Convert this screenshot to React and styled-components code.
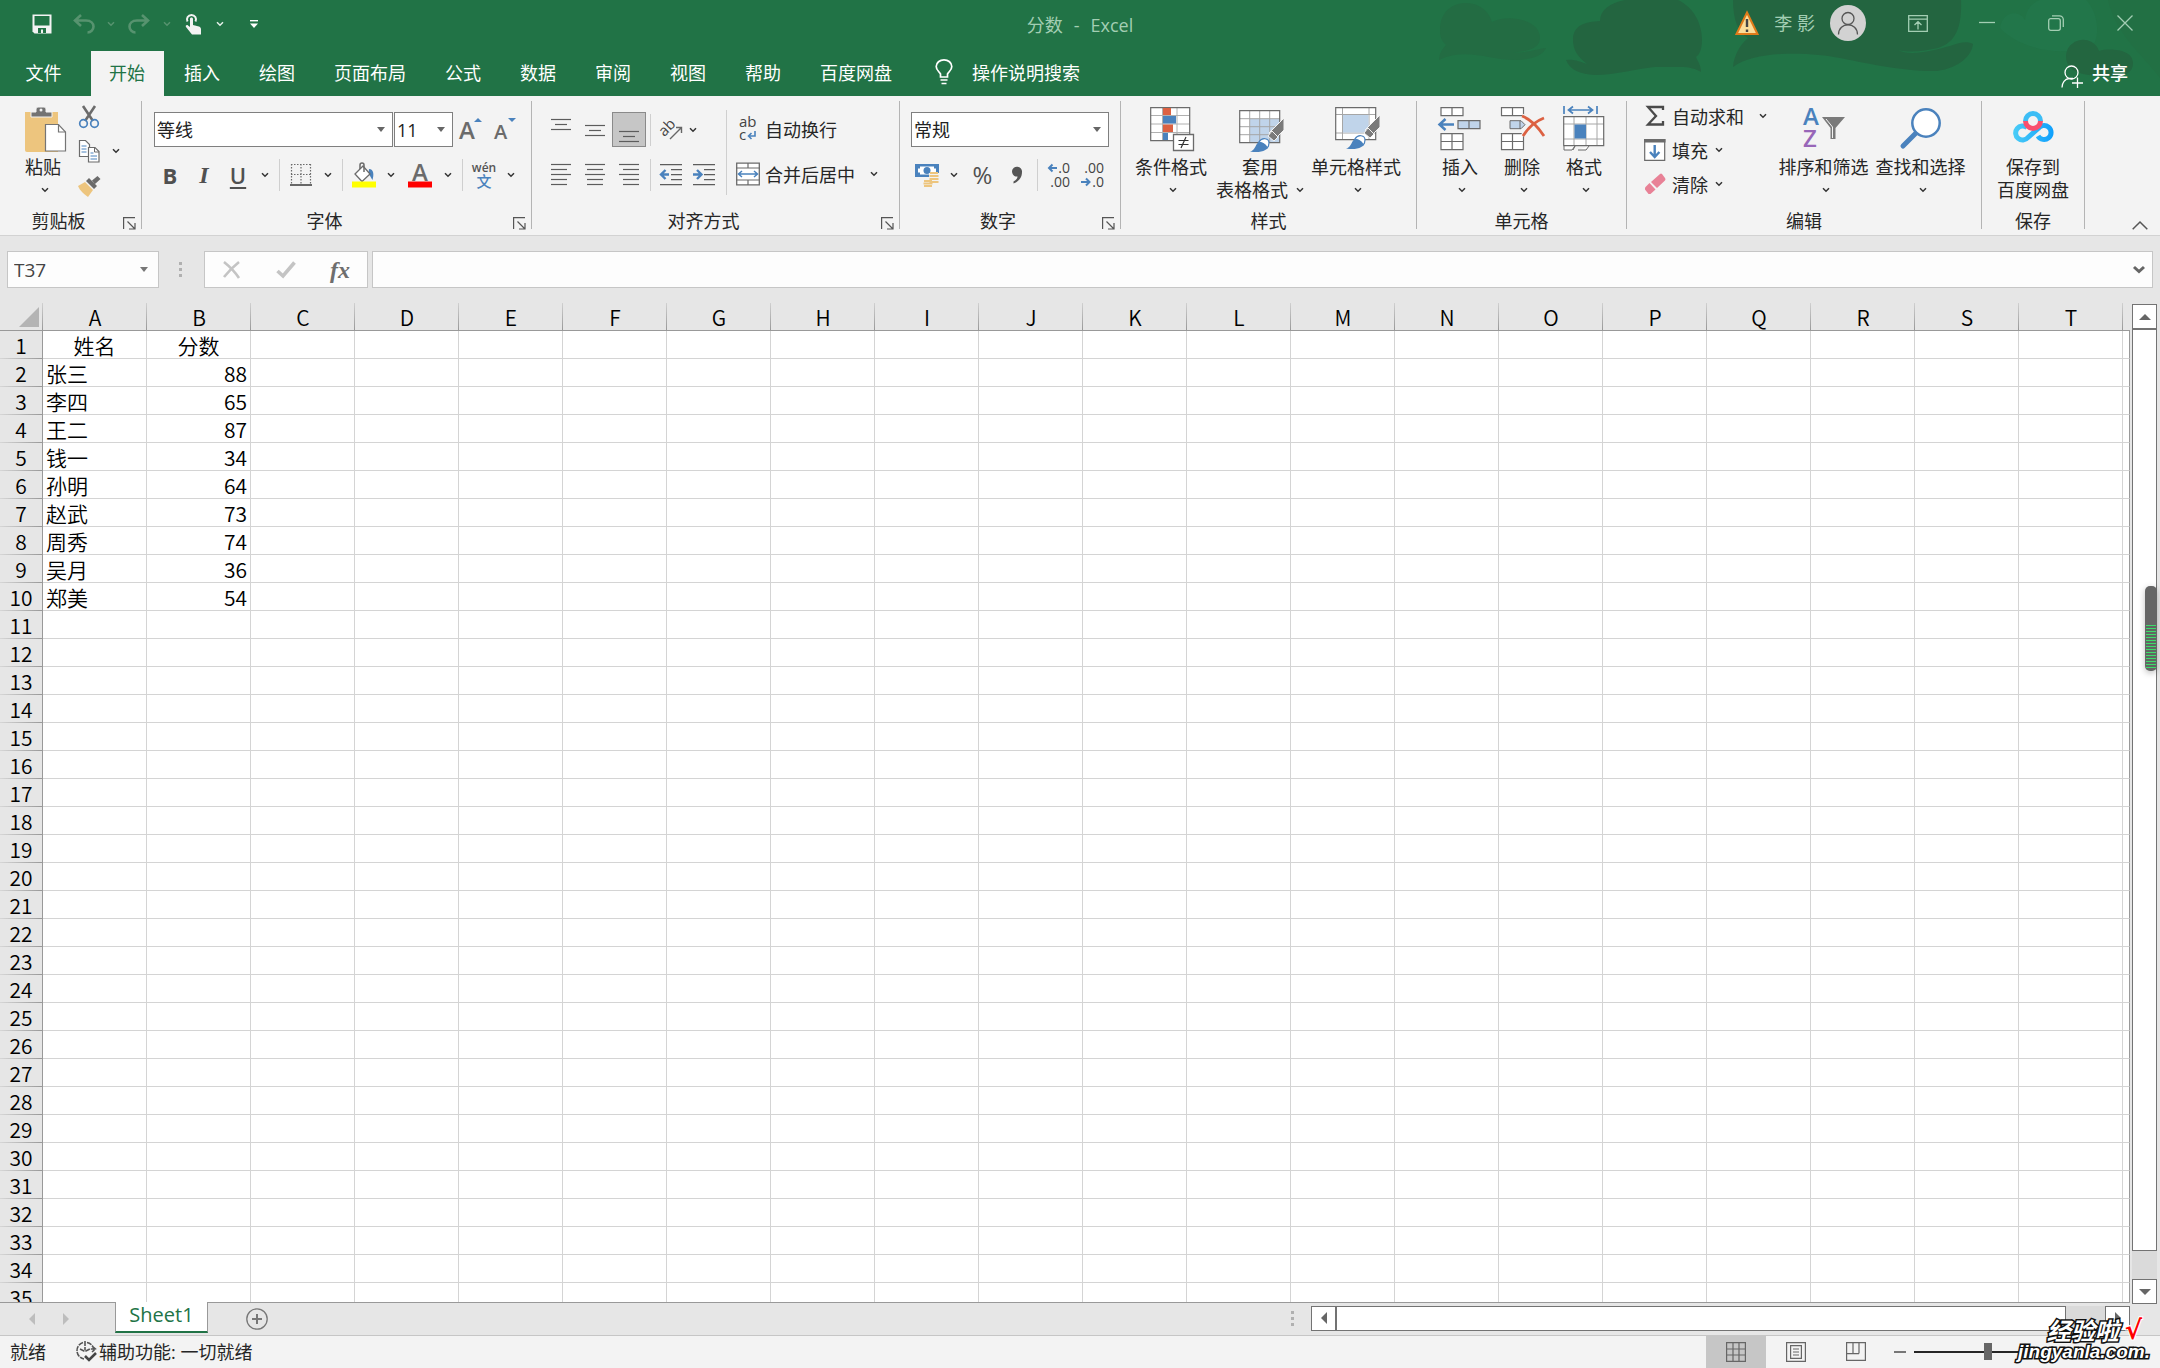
import styled, { createGlobalStyle } from 'styled-components';

const BLUE = '#4a82bd';
const GREY = '#6b6b6b';
const ORANGE = '#dc6142';
const PALE = '#c0d4ea';
const TAN = '#edc57e';
const MINT = '#a3ceb3';

const names = ['张三', '李四', '王二', '钱一', '孙明', '赵武', '周秀', '吴月', '郑美'];
const scores = [88, 65, 87, 34, 64, 73, 74, 36, 54];
const columns = 'ABCDEFGHIJKLMNOPQRST'.split('');
const rows = Array.from({ length: 35 }, (_, i) => i + 1);
const tabs = ['插入', '绘图', '页面布局', '公式', '数据', '审阅', '视图', '帮助', '百度网盘'];

const cellText = (row, col) => {
	if (row === 1) return ['姓名', '分数'][col];
	if (col === 0) return names[row - 2];
	if (col === 1) return scores[row - 2];
	return null;
};

/* ---------- icons ---------- */

const Svg = ({ w = 24, h = w, children, ...rest }) => (
	<svg width={w} height={h} viewBox={`0 0 ${w} ${h}`} fill='none' aria-hidden='true' {...rest}>
		{children}
	</svg>
);

const Chevron = ({ color = '#333' }) => (
	<Svg w={8} h={6}>
		<path d='M1 1.2l3 3 3-3' stroke={color} strokeWidth='1.5' />
	</Svg>
);

const SaveIcon = () => (
	<Svg w={20}>
		<path d='M.5.5h19v19H2.5l-2-2z' fill='#f3f3f3' />
		<path d='M2.500 2h15v9.500h-15zM6 14h8v5h-3v-3.500H9V19H6z' fill='#217346' />
	</Svg>
);

const UndoIcon = ({ flip }) => (
	<Svg w={22} h={20}>
		<path
			transform={flip ? 'translate(22 0) scale(-1 1)' : undefined}
			d='M2 6.500h11c5 0 7.500 3 7.500 6s-2.500 6-6 6M8 1L2 6.500 8 12'
			stroke='#57936f'
			strokeWidth='2.600'
		/>
	</Svg>
);

const TouchIcon = () => (
	<Svg w={18} h={22}>
		<path d='M3.500 8.500a4.500 4.500 0 1 1 8 0' stroke='#f3f3f3' strokeWidth='2' />
		<path d='M6 6c0-2 3-2 3 0v6l6 1.500c1.500.5 2 1.500 2 3V21.500H8L2 14c-1-1.500 1-2.500 2-1.500l2 1.500z' fill='#f3f3f3' />
	</Svg>
);

const CustomizeIcon = () => (
	<Svg w={8} h={8}>
		<path d='M0 .7h8' stroke='#fff' strokeWidth='1.400' />
		<path d='M0 3.500h8L4 8z' fill='#fff' />
	</Svg>
);

const BulbIcon = () => (
	<Svg w={18} h={26}>
		<path d='M5.500 18v-3C4 12.500 1.200 11 1.200 7.500a7.800 6.700 0 0 1 15.600 0c0 3.500-2.800 5-4.300 7.500v3zM5.500 21h7M6.500 24.500h5' stroke='#fff' strokeWidth='1.700' />
	</Svg>
);

const WarningIcon = () => (
	<Svg w={24}>
		<path d='M12 1.500L22.500 23h-21z' fill='#fbdc98' stroke='#e07b1a' strokeWidth='2' />
		<path d='M12 8v8M12 18.500v2.500' stroke='#444' strokeWidth='2.400' />
	</Svg>
);

const PersonIcon = () => (
	<Svg w={24}>
		<circle cx='12' cy='7.500' r='6' stroke='#555' strokeWidth='1.300' />
		<path d='M2.500 23.500c0-13 19-13 19 0' stroke='#555' strokeWidth='1.300' />
	</Svg>
);

const RibbonDisplayIcon = () => (
	<Svg w={20} h={17}>
		<path d='M.7.7h18.600v15.600H.7zM.7 4.200h18.600M10 14.500V7M6.500 10L10 6.700 13.500 10' stroke={MINT} strokeWidth='1.300' />
	</Svg>
);

const MinIcon = () => <Svg w={16}><path d='M0 7.500h16' stroke={MINT} strokeWidth='1.300' /></Svg>;

const RestoreIcon = () => (
	<Svg w={16}>
		<rect x='.7' y='3.700' width='11.600' height='11.600' rx='2' stroke={MINT} strokeWidth='1.300' />
		<path d='M4 .8h7.500a3.800 3.800 0 0 1 3.800 3.800V12' stroke={MINT} strokeWidth='1.300' />
	</Svg>
);

const CloseIcon = () => <Svg w={16}><path d='M.5.5l15 15M15.500.5l-15 15' stroke={MINT} strokeWidth='1.300' /></Svg>;

const ShareIcon = () => (
	<Svg w={23}>
		<circle cx='10.500' cy='7.500' r='6.500' stroke='#fff' strokeWidth='1.300' />
		<path d='M1 22.500c0-5 3-8.500 7-9h4M11 18h11M16.500 12.500v10.500' stroke='#fff' strokeWidth='1.300' />
	</Svg>
);

const PasteIcon = () => (
	<Svg w={46}>
		<path d='M5 6h33v40H7a2 2 0 0 1-2-2z' fill={TAN} />
		<path d='M11 11V6h5V3q0-2 2-2h6q2 0 2 2v3h6v5z' fill='#737373' stroke='#f3f3f3' strokeWidth='1' />
		<circle cx='21' cy='4' r='1.500' fill='#f3f3f3' />
		<path d='M25.500 18.500h13l7 7.500v19h-20z' fill='#fff' stroke='#757575' strokeWidth='1.200' />
		<path d='M38.500 18.500V26h7' stroke='#757575' strokeWidth='1.200' />
	</Svg>
);

const CutIcon = () => (
	<Svg w={22} h={24}>
		<path d='M5 1l10 15M17 1L7 16' stroke={GREY} strokeWidth='2.600' />
		<circle cx='5.500' cy='18.500' r='3.800' stroke={BLUE} strokeWidth='1.700' />
		<circle cx='16.500' cy='18.500' r='3.800' stroke={BLUE} strokeWidth='1.700' />
	</Svg>
);

const CopyIcon = () => (
	<Svg w={22} h={24}>
		<path d='M1.500 1.500h6l4 4v12h-10z' fill='#fff' stroke={GREY} strokeWidth='1.200' />
		<path d='M3.500 7h5M3.500 10h5M3.500 13h5' stroke={BLUE} />
		<path d='M10.500 8.500h6.500l4 4v10.500H10.500z' fill='#fff' stroke={GREY} strokeWidth='1.200' />
		<path d='M16.500 8.500V13H21' stroke={GREY} />
		<path d='M12.500 14h3M12.500 17h6.500M12.500 20h6.500' stroke={BLUE} />
	</Svg>
);

const PainterIcon = () => (
	<Svg w={24} h={22}>
		<path d='M1 12l7-4 8 8-5 7C7 20 3 17 1 12z' fill={TAN} />
		<path d='M9 7l3-3 8 8-3 3zM15 6.500L20.500 2 23.500 5 18 10z' fill={GREY} />
	</Svg>
);

const GrowIcon = ({ down }) => (
	<Svg w={24} h={26}>
		<text x='0' y='22' fontFamily='Open Sans' fontWeight='600' fontSize={down ? 20 : 24} fill={GREY}>A</text>
		<path d={down ? 'M14 1h8l-4 4z' : 'M15 5h8l-4-4z'} fill={BLUE} />
	</Svg>
);

const BordersIcon = () => (
	<Svg w={22} h={24}>
		<path d='M1 1.500h20M1 11.500h20M1.500 1v20M11 1v20M20.500 1v20' stroke={GREY} strokeWidth='1.200' strokeDasharray='1.500 1.500' />
		<path d='M0 22h22' stroke='#444' strokeWidth='1.600' />
	</Svg>
);

const FillIcon = () => (
	<Svg w={26}>
		<path d='M18 7c5 0 5 6 3.500 11-1.500-2-2-4-4-6z' fill={BLUE} />
		<path d='M4 12l8-8 7 8-8 7.500z' fill='#fff' stroke={GREY} strokeWidth='1.300' />
		<path d='M9 7V3q0-2 2-2t2 2v7' stroke={GREY} strokeWidth='1.500' />
		<path d='M1 19.500h24v6H1z' fill='#ff0' />
	</Svg>
);

const FontColorIcon = () => (
	<Svg w={26}>
		<text x='5' y='19' fontFamily='Open Sans' fontWeight='600' fontSize='24' fill={GREY}>A</text>
		<path d='M1 19.500h24v6H1z' fill='#f00' />
	</Svg>
);

const PhoneticIcon = () => (
	<Svg w={24} h={28}>
		<text x='12' y='11' textAnchor='middle' fontFamily='Open Sans' fontSize='12' fontWeight='600' fill='#555'>wén</text>
		<text x='12' y='26' textAnchor='middle' fontFamily='Noto Sans CJK SC' fontSize='15' fontWeight='500' fill={BLUE}>文</text>
	</Svg>
);

const Lines = ({ widths, align = 'center', top = 1, step = 5, h = 24 }) => (
	<Svg w={20} h={h}>
		{widths.map((n, i) => {
			const x = { left: 0, center: (20 - n) / 2, right: 20 - n }[align];
			return <path key={i} d={`M${x} ${top + i * step + 0.5}h${n}`} stroke='#5c5c5c' strokeWidth='1.200' />;
		})}
	</Svg>
);

const OrientIcon = () => (
	<Svg w={22} h={22}>
		<text x='1' y='15' transform='rotate(-45 6 14)' fontFamily='Open Sans' fontSize='15' fill='#444'>ab</text>
		<path d='M9 20L20 9M15 8.500h5.500V14' stroke='#666' strokeWidth='1.400' />
	</Svg>
);

const IndentIcon = ({ right }) => (
	<Svg w={22} h={22}>
		<path d='M0 .6h22M11 5.600h11M11 10.600h11M11 15.600h11M0 20.600h22' stroke='#5c5c5c' strokeWidth='1.200' />
		<path d={right ? 'M0 10.500h7M4 6l4.500 4.500L4 15' : 'M9 10.500H2M5.500 6L1 10.500 5.500 15'} stroke={BLUE} strokeWidth='2.400' />
	</Svg>
);

const WrapIcon = () => (
	<Svg w={24}>
		<text x='3' y='10' fontFamily='Open Sans' fontSize='15' fill='#444'>ab</text>
		<text x='3' y='23' fontFamily='Open Sans' fontSize='15' fill='#444'>c</text>
		<path d='M19 14v5h-6M15.500 16L12.500 19l3 3' stroke={BLUE} strokeWidth='1.600' />
	</Svg>
);

const MergeIcon = () => (
	<Svg w={24}>
		<path d='M.7 1.200h22.600v21.600H.7z' fill='#fff' stroke={GREY} strokeWidth='1.300' />
		<path d='M0 6h24M0 18h24M12 1v5M12 18v5' stroke={GREY} strokeWidth='1.200' />
		<path d='M3 12h18M6 9l-3.500 3L6 15M18 9l3.500 3-3.500 3' stroke={BLUE} strokeWidth='1.500' />
	</Svg>
);

const MoneyIcon = () => (
	<Svg w={24}>
		<path d='M0 1h24v13H0z' fill={BLUE} />
		<path d='M5 3.500h14v2h2v4h-2v2H5v-2H3v-4h2z' fill='#fff' />
		<circle cx='12' cy='7.500' r='3.500' fill={BLUE} />
		<path d='M14 10h10v10h-6v4H8v-6h6z' fill='#f3f3f3' />
		<path d='M15 10h8M14.500 13h9M14.500 16h9M14.500 19h9M9 18h8M8.500 20.500h9M9 23h8' stroke={TAN} strokeWidth='2' />
	</Svg>
);

const DecimalIcon = ({ less }) => (
	<Svg w={24} h={26}>
		<text x='23' y='11' textAnchor='end' fontFamily='Open Sans' fontSize='14' fill='#444'>{less ? '.00' : '.0'}</text>
		<text x='23' y='25' textAnchor='end' fontFamily='Open Sans' fontSize='14' fill='#444'>{less ? '.0' : '.00'}</text>
		<path d={less ? 'M0 20h8M5 16.500L8.500 20 5 23.500' : 'M10 6H2M5.500 2.500L2 6l3.500 3.500'} stroke={BLUE} strokeWidth='2' />
	</Svg>
);

const Brush = ({ y = 0 }) => (
	<g transform={`translate(0 ${y})`}>
		<path d='M45 12v12l-9 9-6-6z' fill='#7a7a7a' stroke='#f3f3f3' />
		<path d='M33 25l6 6-4 4-6-5z' fill='#7a7a7a' stroke='#f3f3f3' />
		<path d='M11 45.500c5-1 5-6 8-9 4-5 11-3 11 2 0 6-9 9-19 7z' fill={BLUE} />
		<path d='M20 36c3-5 10-4 10 1 0 2-1 4-2 5-1-4-4-5-8-6z' fill='#fff' stroke={BLUE} strokeWidth='1.200' />
	</g>
);

const ConditionalIcon = () => (
	<Svg w={46}>
		<g transform='translate(2 0)'>
			<path d='M.7 1.700h39v33H.7z' fill='#fff' />
			<path d='M1 9.500h39M1 18h39M1 26.500h39M12.500 2v32M27 2v32' stroke='#b0b0b0' />
			<path d='M.7 1.700h39v33H.7z' stroke={GREY} strokeWidth='1.200' />
			<path d='M13 2h8v7h-8zM13 18.500h10v7.500H13z' fill={ORANGE} />
			<path d='M13 10h13v7.500H13zM13 27h5v7h-5z' fill={BLUE} />
			<path d='M23.500 28.500h20v16h-20z' fill='#fff' stroke={GREY} strokeWidth='1.300' />
			<path d='M28.500 34.500h10M28.500 38.500h10M36 31l-5 11' stroke='#333' strokeWidth='1.200' />
		</g>
	</Svg>
);

const TableFormatIcon = () => (
	<Svg w={46}>
		<g transform='translate(2 0)'>
			<path d='M.7 4.700h40v32H.7z' fill='#fff' />
			<path d='M11 13h29.500v23.500H11z' fill={PALE} />
			<path d='M1 12.700h40M1 20.700h40M1 28.700h40M10.700 5v32M20.700 5v32M30.700 5v32' stroke='#a6a6a6' />
			<path d='M.7 4.700h40v32H.7z' stroke={GREY} strokeWidth='1.200' />
			<Brush />
		</g>
	</Svg>
);

const CellStyleIcon = () => (
	<Svg w={46}>
		<g transform='translate(2 0)'>
			<path d='M.7 1.700h40v32H.7z' fill='#fff' />
			<path d='M1 8.500h40M1 27h40M7.500 2v32M34 2v32' stroke='#a6a6a6' />
			<path d='M8 9h25.500v17.500H8z' fill={PALE} />
			<path d='M.7 1.700h40v32H.7z' stroke={GREY} strokeWidth='1.200' />
			<Brush y={-3} />
		</g>
	</Svg>
);

const InsertIcon = () => (
	<Svg w={46}>
		<path d='M4 1.700h22v8H4zM15 2v8M4 27.700h22v16H4zM4 35.500h22M15 28v16' fill='#fff' stroke={GREY} strokeWidth='1.200' />
		<path d='M21 14.700h22v8H21zM32 15v8' fill={PALE} stroke={GREY} strokeWidth='1.200' />
		<path d='M17 18.500H3M8.500 13l-6 5.500 6 5.500' stroke={BLUE} strokeWidth='2.500' />
	</Svg>
);

const DeleteIcon = () => (
	<Svg w={46}>
		<path d='M2.500 1.700h22v8h-22zM13.500 2v8M2.500 27.700h22v16h-22zM2.500 35.500h22M13.500 28v16' fill='#fff' stroke={GREY} strokeWidth='1.200' />
		<path d='M11 14.700h11l4 4-4 4H11zM21 15v8' fill={PALE} stroke={GREY} />
		<path d='M23 10c8 3 16 11 22 20M45 12c-8 3-16 10-21 18' stroke='#f3f3f3' strokeWidth='5' />
		<path d='M23 10c8 3 16 11 22 20M45 12c-8 3-16 10-21 18' stroke={ORANGE} strokeWidth='2.800' />
	</Svg>
);

const FormatIcon = () => (
	<Svg w={46}>
		<path d='M3 0v8M36 0v8M8 4h23M12 .5L7.500 4l4.500 3.500M27 .5L31.500 4 27 7.500' stroke={BLUE} strokeWidth='1.700' />
		<path d='M3 40v4h8l3-4M17 44h8l3-4M14 40l-2 4' fill='#fff' stroke={GREY} />
		<path d='M2.700 10.700h40v29h-40z' fill='#fff' />
		<path d='M3 18h40M3 33h40M13 11v29M25 11v29M36 11v29' stroke='#a6a6a6' />
		<path d='M13.500 18.500H25v14H13.500z' fill={BLUE} />
		<path d='M2.700 10.700h40v29h-40z' stroke={GREY} strokeWidth='1.200' />
	</Svg>
);

const SumIcon = () => (
	<Svg w={24}>
		<path d='M20 6V3H5l8 9-8 8.500h15V17' stroke='#4a4a4a' strokeWidth='2.300' />
	</Svg>
);

const FillDownIcon = () => (
	<Svg w={24}>
		<path d='M1.700 1.700h20v20.600h-20z' fill='#fff' stroke={GREY} strokeWidth='1.200' />
		<path d='M1 1h21.500v3.500H1z' fill={GREY} />
		<path d='M11.700 7v12M7 14l4.700 5 4.700-5' stroke={BLUE} strokeWidth='2.400' />
	</Svg>
);

const EraserIcon = () => (
	<Svg w={24}>
		<path d='M8 10l9-8q1-1 2 0l3 4q1 1 0 2.500L14 16z' fill='#e88196' />
		<path d='M6.500 11l6 6.500-5 4.500H5.500L2 17.500v-2z' fill='#e88196' />
	</Svg>
);

const SortIcon = () => (
	<Svg w={46}>
		<text x='2' y='19' fontFamily='Open Sans' fontSize='24' fontWeight='600' fill={BLUE}>A</text>
		<text x='2' y='41' fontFamily='Open Sans' fontSize='24' fontWeight='600' fill='#9866b8'>Z</text>
		<path d='M21 11h23L34.500 22v11h-5V22z' fill='#7a7a7a' />
		<path d='M25 13l6.500 8v11' stroke='#f3f3f3' />
	</Svg>
);

const FindIcon = () => (
	<Svg w={46}>
		<path d='M19 26L5 40' stroke={BLUE} strokeWidth='5' strokeLinecap='round' />
		<circle cx='28' cy='17' r='13.700' fill='#fff' stroke={BLUE} strokeWidth='2.500' />
	</Svg>
);

const NetdiskIcon = () => (
	<Svg w={46}>
		<defs>
			<linearGradient id='ring' x1='0' x2='46' y1='0' y2='0' gradientUnits='userSpaceOnUse'>
				<stop offset='0' stopColor='#4fd0f6' />
				<stop offset='1' stopColor='#0c9dfd' />
			</linearGradient>
		</defs>
		<path d='M31 20L18 31.500a7 7 0 1 1-1-10M28 30a7 7 0 1 0 0-7' stroke='url(#ring)' strokeWidth='5' />
		<path d='M15.500 15a7.500 7.500 0 0 1 15 0' stroke='#3cbdf5' strokeWidth='5' />
		<path d='M30.500 15a7.500 7.500 0 0 1-15 0' stroke='#f8506f' strokeWidth='5' />
	</Svg>
);

const LauncherIcon = () => (
	<Svg w={13}>
		<path d='M.6 12V.6H12M4.500 4.500l7 7M12 6v6H6' stroke='#555' strokeWidth='1.200' />
	</Svg>
);

const CancelIcon = () => (
	<Svg w={20}><path d='M2 2c5 4 11 10 15 16M17 2C12 6 6 12 2 17' stroke='#c4c4c4' strokeWidth='2.600' /></Svg>
);
const AcceptIcon = () => (
	<Svg w={20}><path d='M1.500 11L7 16 18.500 2.500' stroke='#c4c4c4' strokeWidth='3.600' /></Svg>
);

const Triangle = ({ dir, color = '#666' }) => (
	<Svg w={12} h={12}>
		<path
			d={{ up: 'M0 9h12L6 3z', down: 'M0 3h12L6 9z', left: 'M9 0v12L3 6z', right: 'M3 0v12l6-6z' }[dir]}
			fill={color}
		/>
	</Svg>
);

const AccessIcon = () => (
	<Svg w={22}>
		<path d='M8 2.500A8.500 8.500 0 0 0 9 19M12 2.500c3 .5 6 3 6.500 6M10 1v9M5 9l5 2.500L15 9h5M17 6l3.500 3-3.500 3' stroke='#555' strokeWidth='1.600' strokeDasharray='5 1' />
		<path d='M10 16l4 4 7-7' stroke='#444' strokeWidth='2.600' />
	</Svg>
);

const NormalViewIcon = () => (
	<Svg w={20}><path d='M.6.6h18.800v18.800H.6zM.6 7h18.800M.6 13h18.800M7 .6v18.800M13 .6v18.800' stroke='#666' strokeWidth='1.200' /></Svg>
);
const PageViewIcon = () => (
	<Svg w={20}><path d='M.6.6h18.800v18.800H.6zM4.600 3.600h10.800v12.800H4.600zM7 7h6M7 10h6M7 13h6' stroke='#666' strokeWidth='1.200' /></Svg>
);
const BreakViewIcon = () => (
	<Svg w={20}><path d='M.6.6h18.800v17.800H.6zM7 .6v11M13 .6v11M.6 11.600h12.400' stroke='#666' strokeWidth='1.200' /></Svg>
);

const CloudArt = () => (
	<Art viewBox='1400 0 760 96' aria-hidden='true'>
		<path d='M1440 30C1440 12 1452 3 1466 3C1480 3 1489 12 1492 22C1505 14 1540 18 1540 38C1540 47 1530 52 1513 52C1525 54 1540 48 1546 48C1543 56 1530 60 1515 60C1490 60 1465 47 1439 60C1440 50 1444 48 1446 45C1441 40 1440 36 1440 30Z' fill='#236c43' />
		<path d='M1573 40C1573 25 1585 22 1600 21C1600 10 1610 3 1625 0H1678C1695 8 1702 25 1702 40C1702 50 1699 55 1696 57C1698 62 1701 65 1701 72C1696 69 1690 67 1680 67H1655C1640 68 1615 75 1595 75C1580 74 1570 70 1566 60C1575 59 1580 62 1587 64C1578 57 1573 50 1573 40Z' fill='#236540' />
		<path d='M1733 0H1961C1962 25 1957 42 1938 48C1925 51 1910 53 1898 50C1910 57 1935 50 1950 46C1960 42 1968 41 1973 44C1972 55 1960 68 1937 71C1905 72 1860 62 1840 58C1810 52 1755 50 1733 67C1734 55 1740 45 1748 38C1738 32 1733 20 1733 0Z' fill='#236540' />
		<path d='M2000 28C2003 10 2020 10 2025 20C2026 8 2034 2 2040 0H2086C2096 10 2100 28 2095 42C2070 60 2020 50 2000 28Z' fill='#22764a' />
		<path d='M2108 0h52v78c-14-20-44-42-52-78z' fill='#227044' />
		<path d='M2066 56a17 17 0 0 1 33-5c10-3 34-2 34 12 0 10-8 13-20 14-20-2-47 0-47-21z' fill='#236640' />
	</Art>
);

/* ---------- page ---------- */

const ToolDrop = ({ w = 20, label }) => (
	<Tool $w={w} aria-label={label}>
		<Chevron />
	</Tool>
);

const Big = ({ w, icon, lines, inlineDrop, noDrop }) => (
	<BigButton $w={w}>
		{icon}
		<span>{lines[0]}</span>
		<span>
			{lines[1]}
			{!noDrop && <Drop $gap={inlineDrop ? 8 : 4}><Chevron /></Drop>}
		</span>
	</BigButton>
);

const RibbonGroup = ({ w, title, launcher, children }) => (
	<>
		<Group $w={w}>
			<GroupBody>{children}</GroupBody>
			<GroupFooter>
				<span>{title}</span>
				{launcher && <Launcher aria-label={`${title}设置`}><LauncherIcon /></Launcher>}
			</GroupFooter>
		</Group>
		<GroupLine />
	</>
);

const Picker = ({ w, label, value }) => (
	<PickerBox $w={w}>
		<select aria-label={label} defaultValue={value}>
			<option>{value}</option>
		</select>
		<Svg w={8} h={5}><path d='M0 0h8L4 5z' fill='#666' /></Svg>
	</PickerBox>
);

export default function App() {
	return (
		<Page>
			<GlobalStyle />
			<Header>
				<CloudArt />
				<TitleBar>
					<QuickAccess>
						<QuickButton $w={38} aria-label='保存'><SaveIcon /></QuickButton>
						<QuickButton $w={46} aria-label='撤消'><UndoIcon /></QuickButton>
						<QuickButton $w={8} aria-label='撤消列表'><Chevron color='#57936f' /></QuickButton>
						<QuickButton $w={48} aria-label='恢复'><UndoIcon flip /></QuickButton>
						<QuickButton $w={8} aria-label='恢复列表'><Chevron color='#57936f' /></QuickButton>
						<QuickButton $w={44} aria-label='触摸模式'><TouchIcon /></QuickButton>
						<QuickButton $w={10} aria-label='触摸选项'><Chevron color='#e6f0ea' /></QuickButton>
						<QuickButton $w={58} aria-label='自定义快速访问工具栏'><CustomizeIcon /></QuickButton>
					</QuickAccess>
					<DocTitle><span>分数</span><span>-</span><span>Excel</span></DocTitle>
					<WindowArea>
						<Account>
							<WarningIcon />
							<span>李 影</span>
							<Avatar aria-label='帐户'><PersonIcon /></Avatar>
						</Account>
						<WindowButton aria-label='功能区显示选项'><RibbonDisplayIcon /></WindowButton>
						<WindowButton aria-label='最小化'><MinIcon /></WindowButton>
						<WindowButton aria-label='还原'><RestoreIcon /></WindowButton>
						<WindowButton aria-label='关闭'><CloseIcon /></WindowButton>
					</WindowArea>
				</TitleBar>
				<TabBar>
					<FileTab>文件</FileTab>
					<Tab $active>开始</Tab>
					{tabs.map((t) => <Tab key={t}>{t}</Tab>)}
					<TellMe><BulbIcon />操作说明搜索</TellMe>
					<Share><ShareIcon /><span>共享</span></Share>
				</TabBar>
			</Header>

			<Ribbon>
				<RibbonGroup w={141} title='剪贴板' launcher>
					<Indent $w={18} />
					<Big w={50} icon={<PasteIcon />} lines={['粘贴']} />
					<SmallStack>
						<SmallRow><Tool aria-label='剪切'><CutIcon /></Tool></SmallRow>
						<SmallRow><Tool aria-label='复制'><CopyIcon /></Tool><ToolDrop label='复制选项' /></SmallRow>
						<SmallRow><Tool aria-label='格式刷'><PainterIcon /></Tool></SmallRow>
					</SmallStack>
				</RibbonGroup>

				<RibbonGroup w={389} title='字体' launcher>
					<Indent $w={11} />
					<Stack>
						<PickerRow>
							<Picker w={239} label='字体' value='等线' />
							<Picker w={59} label='字号' value='11' />
							<Tool aria-label='增大字号'><GrowIcon /></Tool>
							<Tool aria-label='减小字号'><GrowIcon down /></Tool>
						</PickerRow>
						<ToolRow>
							<Tool aria-label='加粗'><Glyph $weight={700}>B</Glyph></Tool>
							<Tool aria-label='倾斜'><Glyph $italic $weight={700}>I</Glyph></Tool>
							<Tool aria-label='下划线'><Glyph $underline $weight={600}>U</Glyph></Tool>
							<ToolDrop label='下划线选项' />
							<ToolLine />
							<Tool aria-label='边框'><BordersIcon /></Tool>
							<ToolDrop label='边框选项' />
							<ToolLine />
							<Tool aria-label='填充颜色'><FillIcon /></Tool>
							<ToolDrop label='填充颜色选项' />
							<Tool $w={37} aria-label='字体颜色'><FontColorIcon /></Tool>
							<ToolDrop label='字体颜色选项' />
							<ToolLine />
							<Tool aria-label='拼音'><PhoneticIcon /></Tool>
							<ToolDrop label='拼音选项' />
						</ToolRow>
					</Stack>
				</RibbonGroup>

				<RibbonGroup w={367} title='对齐方式' launcher>
					<Indent $w={12} />
					<Stack $w={182}>
						<ToolRow $tall>
							<Tool aria-label='顶端对齐'><Lines widths={[20, 12, 20]} /></Tool>
							<Tool aria-label='垂直居中'><Lines widths={[20, 12, 20]} top={7} /></Tool>
							<Tool $on aria-label='底端对齐'><Lines widths={[20, 12, 20]} top={13} /></Tool>
							<ToolLine />
							<Tool aria-label='方向'><OrientIcon /></Tool>
							<ToolDrop w={8} label='方向选项' />
						</ToolRow>
						<ToolRow>
							<Tool aria-label='左对齐'><Lines align='left' widths={[20, 16, 20, 16, 16]} /></Tool>
							<Tool aria-label='居中'><Lines widths={[20, 16, 20, 16, 16]} /></Tool>
							<Tool aria-label='右对齐'><Lines align='right' widths={[20, 16, 20, 16, 16]} /></Tool>
							<ToolLine />
							<Tool $w={32} aria-label='减少缩进量'><IndentIcon /></Tool>
							<Tool $w={34} aria-label='增加缩进量'><IndentIcon right /></Tool>
						</ToolRow>
					</Stack>
					<LongLine />
					<Stack>
						<ToolRow $tall><TextTool><WrapIcon />自动换行</TextTool></ToolRow>
						<ToolRow><TextTool><MergeIcon />合并后居中<Drop $gap={10}><Chevron /></Drop></TextTool></ToolRow>
					</Stack>
				</RibbonGroup>

				<RibbonGroup w={220} title='数字' launcher>
					<Indent $w={10} />
					<Stack>
						<PickerRow><Picker w={198} label='数字格式' value='常规' /></PickerRow>
						<ToolRow>
							<Tool aria-label='会计数字格式'><MoneyIcon /></Tool>
							<ToolDrop label='会计数字格式选项' />
							<Tool $w={37} aria-label='百分比样式'><Glyph $weight={400}>%</Glyph></Tool>
							<Tool $w={32} aria-label='千位分隔样式'><Svg w={12} h={18}><path d='M1 5a5 4.800 0 1 1 10 1c0 6-4 10-8.500 11.500v-2c3-1.500 4-3.500 4-5C3.500 11 1 8.500 1 5z' fill='#555' /></Svg></Tool>
							<ToolLine />
							<Tool aria-label='增加小数位数'><DecimalIcon /></Tool>
							<Tool aria-label='减少小数位数'><DecimalIcon less /></Tool>
						</ToolRow>
					</Stack>
				</RibbonGroup>

				<RibbonGroup w={295} title='样式'>
					<Indent $w={6} />
					<Big w={88} icon={<ConditionalIcon />} lines={['条件格式']} />
					<Big w={90} icon={<TableFormatIcon />} lines={['套用', '表格格式']} inlineDrop />
					<Big w={102} icon={<CellStyleIcon />} lines={['单元格样式']} />
				</RibbonGroup>

				<RibbonGroup w={209} title='单元格'>
					<Indent $w={12} />
					<Big w={62} icon={<InsertIcon />} lines={['插入']} />
					<Big w={62} icon={<DeleteIcon />} lines={['删除']} />
					<Big w={62} icon={<FormatIcon />} lines={['格式']} />
				</RibbonGroup>

				<RibbonGroup w={354} title='编辑'>
					<Indent $w={6} />
					<SmallStack $w={142}>
						<SmallRow><TextTool><SumIcon />自动求和<Drop $gap={10}><Chevron /></Drop></TextTool></SmallRow>
						<SmallRow><TextTool><FillDownIcon />填充<Drop $gap={2}><Chevron /></Drop></TextTool></SmallRow>
						<SmallRow><TextTool><EraserIcon />清除<Drop $gap={2}><Chevron /></Drop></TextTool></SmallRow>
					</SmallStack>
					<Big w={97} icon={<SortIcon />} lines={['排序和筛选']} />
					<Big w={97} icon={<FindIcon />} lines={['查找和选择']} />
				</RibbonGroup>

				<RibbonGroup w={102} title='保存'>
					<Big w={102} icon={<NetdiskIcon />} lines={['保存到', '百度网盘']} noDrop />
				</RibbonGroup>

				<Collapse aria-label='折叠功能区'>
					<Svg w={16} h={9}><path d='M.7 8.300L8 1l7.300 7.300' stroke='#555' strokeWidth='1.500' /></Svg>
				</Collapse>
			</Ribbon>

			<FormulaBar>
				<NameBox>
					<input aria-label='名称框' defaultValue='T37' />
					<Svg w={8} h={5}><path d='M0 0h8L4 5z' fill='#777' /></Svg>
				</NameBox>
				<Dots><i /><i /><i /></Dots>
				<FormulaTools>
					<button aria-label='取消'><CancelIcon /></button>
					<button aria-label='输入'><AcceptIcon /></button>
					<button aria-label='插入函数'><Fx>fx</Fx></button>
				</FormulaTools>
				<FormulaInput>
					<input aria-label='编辑栏' />
					<Svg w={12} h={9}><path d='M1 2l5 4.500L11 2' stroke='#666' strokeWidth='3' /></Svg>
				</FormulaInput>
			</FormulaBar>

			<Sheet>
				<GridWrap>
					<Grid>
						<colgroup>
							<col width='43' />
							{columns.map((c) => <col key={c} width='104' />)}
							<col />
						</colgroup>
						<thead>
							<tr>
								<th aria-label='全选'><Svg w={20}><path d='M20 0v20H0z' fill='#b4b4b4' /></Svg></th>
								{columns.map((c) => <th key={c} scope='col'>{c}</th>)}
								<th aria-label='U' />
							</tr>
						</thead>
						<tbody>
							{rows.map((r) => (
								<tr key={r}>
									<th scope='row'>{r}</th>
									{columns.map((c, i) => (
										<Cell key={c} $align={r === 1 ? 'center' : i === 1 ? 'right' : 'left'}>{cellText(r, i)}</Cell>
									))}
									<Cell $edge />
								</tr>
							))}
						</tbody>
					</Grid>
				</GridWrap>
				<VScroll>
					<ScrollButton aria-label='向上滚动'><Triangle dir='up' /></ScrollButton>
					<VThumb />
					<VTrack />
					<ScrollButton aria-label='向下滚动'><Triangle dir='down' /></ScrollButton>
				</VScroll>
				<MeterPill />
			</Sheet>

			<SheetBar>
				<NavArrows>
					<button aria-label='上一工作表'><Triangle dir='left' color='#bdbdbd' /></button>
					<button aria-label='下一工作表'><Triangle dir='right' color='#bdbdbd' /></button>
				</NavArrows>
				<SheetTab>Sheet1</SheetTab>
				<AddSheet aria-label='新工作表'>
					<Svg w={22}><circle cx='11' cy='11' r='10.200' stroke='#777' strokeWidth='1.300' /><path d='M6 11h10M11 6v10' stroke='#777' strokeWidth='2' /></Svg>
				</AddSheet>
				<HScroll>
					<Dots $narrow><i /><i /><i /></Dots>
					<ScrollButton aria-label='向左滚动'><Triangle dir='left' /></ScrollButton>
					<HThumb />
					<HTrack />
					<ScrollButton aria-label='向右滚动'><Triangle dir='right' /></ScrollButton>
				</HScroll>
			</SheetBar>

			<StatusBar>
				<Ready>就绪</Ready>
				<Access><AccessIcon />辅助功能: 一切就绪</Access>
				<Views>
					<ViewButton $on aria-label='普通'><NormalViewIcon /></ViewButton>
					<ViewButton aria-label='页面布局'><PageViewIcon /></ViewButton>
					<ViewButton aria-label='分页预览'><BreakViewIcon /></ViewButton>
					<ZoomOut aria-label='缩小'><Svg w={12} h={2}><path d='M0 1h12' stroke='#333' strokeWidth='1.300' /></Svg></ZoomOut>
					<ZoomSlider type='range' min='0' max='100' defaultValue='50' aria-label='显示比例' />
				</Views>
			</StatusBar>

			<Watermark>
				<strong>经验啦<em>√</em></strong>
				<span>jingyanla.com.</span>
			</Watermark>
		</Page>
	);
}

const GlobalStyle = createGlobalStyle`
	* {
		box-sizing: border-box;
	}
	body {
		margin: 0;
		overflow: hidden;
		font-family: 'Open Sans', 'Noto Sans CJK SC', sans-serif;
		font-size: 18px;
		color: #262626;
	}
	button, input, select {
		font: inherit;
		color: inherit;
		border: 0;
		padding: 0;
		margin: 0;
		background: none;
		outline: none;
	}
	svg {
		flex: none;
		display: block;
		overflow: visible;
	}
`;

const Page = styled.div`
	position: relative;
	display: flex;
	flex-direction: column;
	height: 100vh;
	overflow: hidden;
	background: #e6e6e6;
`;

const Header = styled.header`
	position: relative;
	background: #217346;
	color: #fff;
`;

const Art = styled.svg`
	position: absolute;
	top: 0;
	right: 0;
	width: 760px;
	height: 96px;
`;

const TitleBar = styled.div`
	position: relative;
	display: grid;
	grid-template-columns: 1fr auto 1fr;
	height: 51px;
`;

const QuickAccess = styled.div`
	display: flex;
	align-items: center;
	height: 48px;
	padding-left: 23px;
`;

const QuickButton = styled.button`
	display: flex;
	align-items: center;
	justify-content: center;
	width: ${(p) => p.$w}px;
	height: 32px;
`;

const DocTitle = styled.div`
	display: flex;
	gap: 11px;
	line-height: 50px;
	color: ${MINT};
`;

const WindowArea = styled.div`
	display: flex;
	align-items: center;
	justify-content: flex-end;
	height: 46px;
	padding-right: 1px;
`;

const Account = styled.div`
	display: flex;
	align-items: center;
	gap: 15px;
	margin-right: 17px;
	color: ${MINT};
	span {
		padding-bottom: 2px;
	}
`;

const Avatar = styled.button`
	display: flex;
	align-items: center;
	justify-content: center;
	width: 36px;
	height: 36px;
	border-radius: 50%;
	background: #d2d2d2;
`;

const WindowButton = styled.button`
	display: flex;
	align-items: center;
	justify-content: center;
	width: 69px;
	height: 46px;
`;

const TabBar = styled.nav`
	position: relative;
	display: flex;
	gap: 2px;
	height: 45px;
`;

const Tab = styled.button`
	padding: 0 19px 4px 18px;
	white-space: nowrap;
	background: ${(p) => (p.$active ? '#f3f3f3' : 'none')};
	color: ${(p) => (p.$active ? '#217346' : '#fff')};
`;

const FileTab = styled(Tab)`
	width: 89px;
	padding: 0 2px 4px 0;
`;

const TellMe = styled.button`
	display: flex;
	align-items: center;
	gap: 19px;
	padding: 0 0 4px 22px;
	white-space: nowrap;
`;

const Share = styled.button`
	display: flex;
	align-items: center;
	gap: 8px;
	margin-left: auto;
	padding-right: 32px;
	font-weight: 500;
	span {
		padding-bottom: 4px;
	}
	svg {
		margin-top: 6px;
	}
`;

const Ribbon = styled.section`
	display: flex;
	height: 140px;
	background: #f3f3f3;
	border-bottom: 1px solid #d2d2d2;
`;

const Group = styled.div`
	display: flex;
	flex: none;
	flex-direction: column;
	width: ${(p) => p.$w}px;
`;

const GroupBody = styled.div`
	display: flex;
	height: 112px;
`;

const GroupFooter = styled.div`
	display: flex;
	height: 27px;
	line-height: 27px;
	text-align: center;
	span {
		flex: 1;
	}
`;

const Launcher = styled.button`
	display: flex;
	align-items: center;
	justify-content: center;
	width: 24px;
	height: 30px;
`;

const GroupLine = styled.div`
	flex: none;
	width: 1px;
	height: 128px;
	margin-top: 5px;
	background: #b4b4b4;
`;

const Indent = styled.div`
	flex: none;
	width: ${(p) => p.$w}px;
`;

const Stack = styled.div`
	display: flex;
	flex-direction: column;
	gap: 12px;
	width: ${(p) => (p.$w ? `${p.$w}px` : 'auto')};
	padding-top: 16px;
`;

const SmallStack = styled.div`
	width: ${(p) => (p.$w ? `${p.$w}px` : 'auto')};
	padding: 4px 0 0 4px;
`;

const SmallRow = styled.div`
	display: flex;
	align-items: center;
	height: 34px;
`;

const ToolRow = styled.div`
	display: flex;
	align-items: center;
	height: ${(p) => (p.$tall ? 35 : 32)}px;
`;

const PickerRow = styled(ToolRow)`
	height: 35px;
	gap: 1px;
	padding-left: 1px;
`;

const Tool = styled.button`
	display: flex;
	flex: none;
	align-items: center;
	justify-content: center;
	width: ${(p) => p.$w || 34}px;
	height: ${(p) => (p.$on ? 35 : 32)}px;
	background: ${(p) => (p.$on ? '#c6c6c6' : 'none')};
	border: ${(p) => (p.$on ? '1px solid #8a8a8a' : '0')};
`;

const Glyph = styled.span`
	font-family: ${(p) => (p.$italic ? "'Liberation Serif', serif" : "'Open Sans', sans-serif")};
	font-size: ${(p) => (p.$weight === 400 || p.$italic ? 24 : 22)}px;
	font-weight: ${(p) => p.$weight};
	font-style: ${(p) => (p.$italic ? 'italic' : 'normal')};
	line-height: 32px;
	color: #505050;
	text-decoration: ${(p) => (p.$underline ? 'underline' : 'none')};
	text-decoration-thickness: 2px;
	text-underline-offset: 3px;
`;

const ToolLine = styled.div`
	width: 1px;
	height: 32px;
	margin: 0 4px;
	background: #cfcfcf;
`;

const LongLine = styled.div`
	width: 1px;
	height: 85px;
	margin-top: 14px;
	background: #cfcfcf;
`;

const TextTool = styled.button`
	display: flex;
	align-items: center;
	gap: 5px;
	padding: 0 0 2px 6px;
	white-space: nowrap;
	${ToolRow} & {
		padding-left: 9px;
	}
`;

const Drop = styled.i`
	display: inline-flex;
	align-items: center;
	height: 18px;
	margin-left: ${(p) => p.$gap}px;
`;

const BigButton = styled.button`
	display: flex;
	flex: none;
	flex-direction: column;
	align-items: center;
	width: ${(p) => p.$w}px;
	padding-top: 10px;
	line-height: 23px;
	svg {
		margin-bottom: 4px;
	}
	span {
		display: flex;
		align-items: center;
		height: 23px;
		white-space: nowrap;
	}
	span svg {
		margin-bottom: 2px;
	}
`;

const PickerBox = styled.div`
	position: relative;
	display: flex;
	align-items: center;
	width: ${(p) => p.$w}px;
	height: 35px;
	border: 1px solid #7f7f7f;
	background: #fff;
	select {
		width: 100%;
		height: 33px;
		padding-left: 2px;
		appearance: none;
		font-size: 18px;
		color: #222;
	}
	svg {
		position: absolute;
		right: 7px;
		pointer-events: none;
	}
`;

const Collapse = styled.button`
	display: flex;
	align-items: flex-end;
	margin-left: auto;
	padding: 0 12px 5px;
`;

const FormulaBar = styled.div`
	display: flex;
	height: 67px;
	padding: 15px 7px 15px;
`;

const Box = styled.div`
	display: flex;
	align-items: center;
	height: 37px;
	border: 1px solid #c6c6c6;
	background: #fdfdfd;
`;

const NameBox = styled(Box)`
	width: 152px;
	padding: 0 10px 0 6px;
	input {
		flex: 1;
		min-width: 0;
		font-size: 19px;
		color: #444;
	}
`;

const Dots = styled.div`
	display: flex;
	flex-direction: column;
	justify-content: center;
	align-items: center;
	gap: 3px;
	width: ${(p) => (p.$narrow ? 37 : 45)}px;
	padding-right: ${(p) => (p.$narrow ? 0 : 2)}px;
	i {
		width: 3px;
		height: 3px;
		background: #b0b0b0;
	}
`;

const FormulaTools = styled(Box)`
	width: 164px;
	button {
		display: flex;
		align-items: center;
		justify-content: center;
		width: 54px;
		height: 35px;
	}
`;

const Fx = styled.span`
	font: italic 600 24px/30px 'Liberation Serif', serif;
	color: #6e6e6e;
`;

const FormulaInput = styled(Box)`
	flex: 1;
	margin-left: 4px;
	padding: 0 7px;
	input {
		flex: 1;
	}
`;

const Sheet = styled.main`
	position: relative;
	display: flex;
	flex: 1;
	min-height: 0;
`;

const GridWrap = styled.div`
	flex: 1;
	min-width: 0;
	overflow: hidden;
	border-bottom: 1px solid #999;
`;

const Grid = styled.table`
	width: 100%;
	table-layout: fixed;
	border-collapse: separate;
	border-spacing: 0;
	font-family: 'Noto Sans CJK SC', sans-serif;
	font-size: 21px;
	font-weight: 350;
	color: #000;
	tr {
		height: 28px;
	}
	th {
		padding: 0;
		height: 28px;
		line-height: 26px;
		font-weight: 350;
		text-align: center;
		background: #e6e6e6;
	}
	thead th {
		padding-top: 1px;
		border-bottom: 1px solid #999;
		background: linear-gradient(#d0d0d0, #999) right / 1px 100% no-repeat #e6e6e6;
	}
	thead th:last-child {
		background: #e6e6e6;
	}
	thead th svg {
		margin: 0 0 0 19px;
	}
	tbody th {
		border-right: 1px solid #999;
		background: linear-gradient(to right, #d6d6d6, #999) bottom / 100% 1px no-repeat #e6e6e6;
	}
`;

const Cell = styled.td`
	height: 28px;
	padding: 0 3px;
	overflow: hidden;
	line-height: 26px;
	white-space: nowrap;
	text-align: ${(p) => p.$align};
	background: #fff;
	border-right: 1px solid ${(p) => (p.$edge ? '#999' : '#d4d4d4')};
	border-bottom: 1px solid #d4d4d4;
`;

const VScroll = styled.div`
	display: flex;
	flex-direction: column;
	width: 25px;
	margin: 1px 3px -1px 2px;
`;

const ScrollButton = styled.button`
	display: flex;
	flex: none;
	align-items: center;
	justify-content: center;
	width: 25px;
	height: 25px;
	border: 1px solid #737373;
	background: #fff;
`;

const VThumb = styled.div`
	flex: 1;
	border: 1px solid #737373;
	background: #fff;
`;

const VTrack = styled.div`
	height: 28px;
	background: #dadada;
`;

/* small activity meter that floats over the right edge */
const MeterPill = styled.div`
	position: absolute;
	top: 283px;
	right: 3px;
	width: 12px;
	height: 85px;
	border-radius: 5px;
	background: repeating-linear-gradient(#3ddc6a 0 1px, #5f6662 1px 3px) 1px 39px / 10px 43px no-repeat #666;
	box-shadow: 0 2px 6px rgba(0, 0, 0, 0.25);
`;

const SheetBar = styled.div`
	display: flex;
	height: 33px;
	border-bottom: 1px solid #c6c6c6;
`;

const NavArrows = styled.div`
	display: flex;
	gap: 22px;
	width: 115px;
	padding-left: 26px;
`;

const SheetTab = styled.button`
	width: 93px;
	height: 31px;
	margin-top: -1px;
	padding-bottom: 3px;
	font-size: 20px;
	line-height: 24px;
	font-weight: 500;
	color: #217346;
	background: #fff;
	border: solid #999;
	border-width: 0 1px;
	border-bottom: 2px solid #217346;
	z-index: 1;
`;

const AddSheet = styled.button`
	display: flex;
	align-items: center;
	padding-left: 38px;
`;

const HScroll = styled.div`
	display: flex;
	flex: 0 0 41%;
	align-items: center;
	margin-left: auto;
	padding: 0 30px 2px 0;
`;

const HThumb = styled.div`
	flex: 1;
	height: 25px;
	border: 1px solid #737373;
	background: #fff;
`;

const HTrack = styled.div`
	width: 39px;
	height: 25px;
	background: #dadada;
`;

const StatusBar = styled.footer`
	display: flex;
	align-items: center;
	height: 32px;
	background: #f3f3f3;
`;

const Ready = styled.span`
	width: 66px;
	padding: 0 0 2px 10px;
`;

const Access = styled.button`
	display: flex;
	align-items: center;
	gap: 2px;
	padding: 0 0 2px 9px;
`;

const Views = styled.div`
	display: flex;
	align-items: center;
	margin-left: auto;
	padding-right: 98px;
`;

const ViewButton = styled.button`
	display: flex;
	align-items: center;
	justify-content: center;
	width: 60px;
	height: 32px;
	background: ${(p) => (p.$on ? '#c6c6c6' : 'none')};
`;

const ZoomOut = styled.button`
	width: 28px;
	height: 32px;
	padding-left: 8px;
`;

const ZoomSlider = styled.input`
	width: 148px;
	height: 32px;
	appearance: none;
	&::-webkit-slider-runnable-track {
		height: 2px;
		background: #262626;
	}
	&::-webkit-slider-thumb {
		appearance: none;
		width: 8px;
		height: 17px;
		margin-top: -8px;
		background: #666;
	}
`;

const Watermark = styled.div`
	position: absolute;
	right: 10px;
	bottom: 6px;
	display: flex;
	flex-direction: column;
	align-items: flex-end;
	color: #fff;
	pointer-events: none;
	-webkit-text-stroke: 3px #111;
	paint-order: stroke fill;
	strong {
		display: flex;
		padding-right: 8px;
		font: italic 700 24px/24px 'Noto Sans CJK SC', sans-serif;
	}
	em {
		margin-left: 6px;
		font: normal 700 26px/24px 'DejaVu Sans', sans-serif;
		color: #f00;
		-webkit-text-stroke: 2px #fff;
	}
	span {
		font: italic 700 19px/20px 'Liberation Sans', sans-serif;
	}
`;
